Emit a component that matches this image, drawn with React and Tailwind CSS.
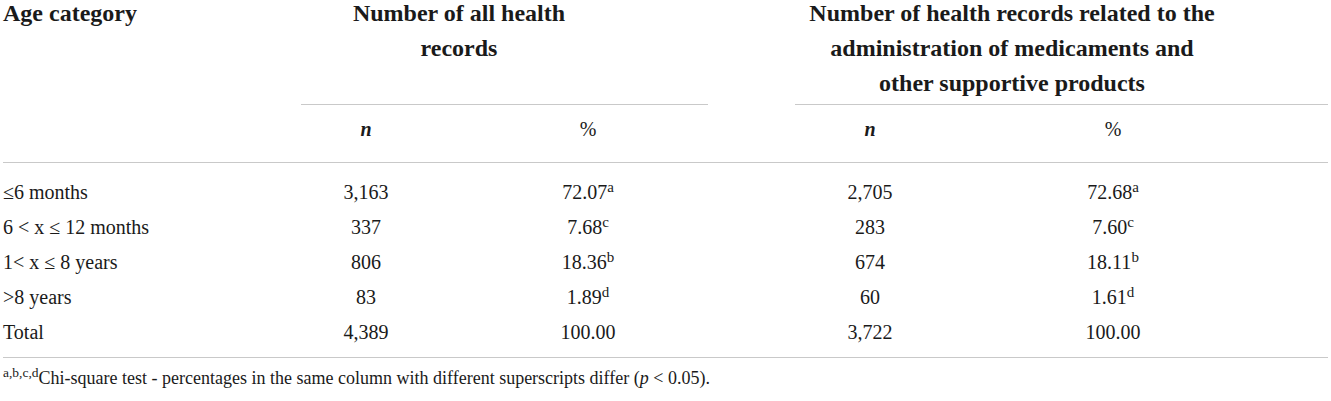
import React from "react";

const rows = [
  { label: "≤6 months", n1: "3,163", p1: "72.07", s1: "a", n2: "2,705", p2: "72.68", s2: "a" },
  { label: "6 < x ≤ 12 months", n1: "337", p1: "7.68", s1: "c", n2: "283", p2: "7.60", s2: "c" },
  { label: "1< x ≤ 8 years", n1: "806", p1: "18.36", s1: "b", n2: "674", p2: "18.11", s2: "b" },
  { label: ">8 years", n1: "83", p1: "1.89", s1: "d", n2: "60", p2: "1.61", s2: "d" },
  { label: "Total", n1: "4,389", p1: "100.00", s1: "", n2: "3,722", p2: "100.00", s2: "" },
];

const cols = "grid grid-cols-[298px_130px_314px_250px_236px]";

export default function App() {
  return (
    <div className="w-[1331px] h-[401px] overflow-hidden bg-white text-[#1a1a1a] font-['Liberation_Serif',serif]">
      <div className="ml-[3px] w-[1325px]">
        {/* top header */}
        <div className="flex -mt-[4px] text-[24px] font-bold leading-[35px]">
          <div className="w-[298px]">Age category</div>
          <div className="w-[407px] h-[109px] border-b border-[#c9c9c9]">
            <div className="w-[316px] text-center">
              Number of all health
              <br />
              records
            </div>
          </div>
          <div className="w-[87px]" />
          <div className="w-[533px] h-[109px] border-b border-[#c9c9c9]">
            <div className="w-[434px] text-center">
              Number of health records related to the
              <br />
              administration of medicaments and
              <br />
              other supportive products
            </div>
          </div>
        </div>

        {/* n / % labels */}
        <div className={`${cols} h-[58px] pt-[7px] border-b border-[#c9c9c9] text-[20px] leading-[35px] text-center`}>
          <div />
          <div className="font-bold italic">n</div>
          <div>%</div>
          <div className="font-bold italic">n</div>
          <div>%</div>
        </div>

        {/* data */}
        <div className="pt-[12px] pb-[7px] border-b border-[#c9c9c9] text-[20px] leading-[35px]">
          {rows.map((r) => (
            <div key={r.label} className={`${cols} text-center`}>
              <div className="text-left">{r.label}</div>
              <div>{r.n1}</div>
              <div>
                {r.p1}
                {r.s1 && <sup>{r.s1}</sup>}
              </div>
              <div>{r.n2}</div>
              <div>
                {r.p2}
                {r.s2 && <sup>{r.s2}</sup>}
              </div>
            </div>
          ))}
        </div>

        {/* footnote */}
        <p className="pt-[8px] text-[18px] leading-[24px]">
          <sup>a,b,c,d</sup>Chi-square test - percentages in the same column with different superscripts differ (
          <i>p</i> &lt; 0.05).
        </p>
      </div>
    </div>
  );
}
